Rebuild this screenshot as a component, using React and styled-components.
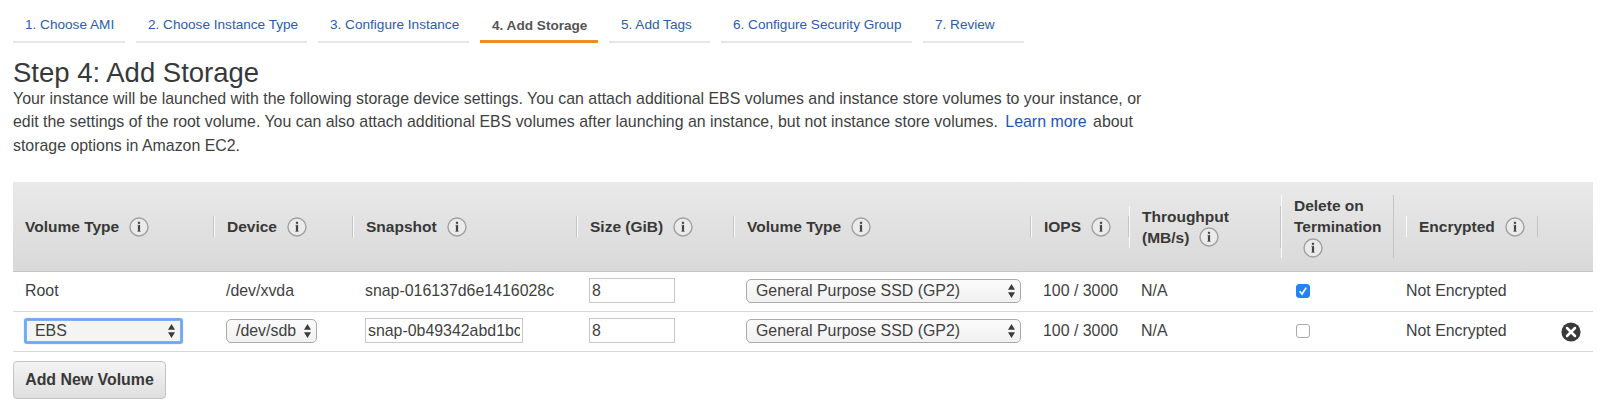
import React from "react";
import styled, { createGlobalStyle, css } from "styled-components";

const GlobalStyle = createGlobalStyle`
  * { box-sizing: border-box; }
  body {
    margin: 0;
    background: #fff;
    color: #3f3f3f;
    font-family: "Liberation Sans", Arial, Helvetica, sans-serif;
    font-size: 15.9px;
  }
`;

const Page = styled.main`
  width: 1600px;
  height: 414px;
  padding: 12px 7px 0 13px;
  overflow: hidden;
`;

const Steps = styled.nav`
  display: flex;
  gap: 11px;
  height: 31px;
`;

const Step = styled.a`
  width: ${(p) => p.$width}px;
  height: 31px;
  padding: ${(p) => (p.$active ? 5 : 4)}px 0 0 12px;
  border-bottom: ${(p) => (p.$active ? "3px solid #f28c1c" : "2px solid #e6e6e6")};
  color: ${(p) => (p.$active ? "#555" : "#2a5db0")};
  font-size: 13.6px;
  font-weight: ${(p) => (p.$active ? 700 : 400)};
  line-height: 17px;
  white-space: nowrap;
`;

const Title = styled.h1`
  margin: 13px 0 0;
  color: #383838;
  font-size: 27.5px;
  font-weight: 400;
  line-height: 34px;
`;

const Intro = styled.p`
  margin: -3px 0 0;
  height: 95px;
  line-height: 23.4px;
  white-space: nowrap;
`;

const Line = styled.span`
  display: block;
`;

const Link = styled.a`
  margin: 0 2px 0 3px;
  color: #1a56b8;
`;

const columns = css`
  display: grid;
  grid-template-columns: 201px 139px 224px 157px 297px 98px 152px 125px 132px 55px;
`;

const HeadRow = styled.div`
  ${columns}
  height: 90px;
  align-items: center;
  background: linear-gradient(#e9e9e9, #d9d9d9);
  border-bottom: 1px solid #c6c6c6;
  color: #383838;
  font-size: 15.5px;
  font-weight: 700;
  line-height: 21px;
`;

const HeadCell = styled.div`
  margin-right: ${(p) => p.$inset || 0}px;
  padding-left: 12px;
  border-left: ${(p) => (p.$first ? "0" : "1px solid #fafafa")};
  border-right: 1px solid #c4c4c4;
  white-space: nowrap;
`;

const HeadLine = styled.div`
  display: flex;
  align-items: center;
  gap: 10px;
  height: 21px;
  padding-left: ${(p) => p.$indent || 0}px;
`;

const BodyRow = styled.div`
  ${columns}
  height: 40px;
  padding-bottom: 2px;
  align-items: center;
  border-bottom: 1px solid #d8d8d8;
`;

const Cell = styled.div`
  display: flex;
  align-items: center;
  height: 25px;
  padding-left: ${(p) => p.$left ?? 12}px;
  padding-top: ${(p) => p.$top || 0}px;
  white-space: nowrap;
`;

const Select = styled.div`
  display: flex;
  align-items: center;
  justify-content: space-between;
  width: ${(p) => p.$width}px;
  height: 24px;
  padding: 0 4px 0 9px;
  border: 1px solid #a9a9a9;
  border-radius: 5px;
  background: linear-gradient(#fbfbfb, #f1f1f1);
  ${(p) =>
    p.$focused &&
    css`
      height: 22px;
      margin-left: 1px;
      padding-left: 8px;
      border-color: #7fb0f0;
      border-radius: 1px;
      background: #f4f4f4;
      box-shadow: 0 0 1px 2px #6ba6f5;
    `}
`;

const Field = styled.input`
  width: ${(p) => p.$width}px;
  height: 25px;
  padding: 0 2px;
  border: 1px solid #c8c8c8;
  background: #fff;
  color: inherit;
  font: inherit;
`;

const Check = styled.span`
  display: flex;
  align-items: center;
  justify-content: center;
  width: 14px;
  height: 14px;
  border: 1px solid ${(p) => (p.$checked ? "#2383f6" : "#a8a8a8")};
  border-radius: 3px;
  background: ${(p) => (p.$checked ? "#2383f6" : "#fff")};
`;

const AddButton = styled.button`
  display: block;
  width: 153px;
  height: 38px;
  margin-top: 9px;
  padding: 0;
  border: 1px solid #c3c3c3;
  border-radius: 4px;
  background: linear-gradient(#f3f3f3, #dfdfdf);
  color: #383838;
  font: 700 15.9px "Liberation Sans", Arial, sans-serif;
`;

const InfoIcon = () => (
  <svg width="20" height="20" viewBox="0 0 20 20">
    <circle cx="10" cy="10" r="9" fill="#ebebeb" stroke="#a0a0a0" strokeWidth="1.4" />
    <path d="M10 7.9v6.9" fill="none" stroke="#444" strokeWidth="2.2" />
    <path d="M8.2 8.4H10M8.2 14.4h3.6" fill="none" stroke="#888" strokeWidth="0.8" />
    <rect x="8.9" y="4.8" width="2.2" height="2" fill="#444" />
  </svg>
);

const Arrows = () => (
  <svg width="9" height="16" viewBox="0 0 9 16">
    <path d="M4.5 1 8 6.7H1zM4.5 15 8 9.3H1z" fill="#3c3c3c" />
  </svg>
);

const Tick = () => (
  <svg width="10" height="10" viewBox="0 0 10 10">
    <path d="M1.6 5.2 4 8 8.2 1.6" fill="none" stroke="#fff" strokeWidth="1.7" />
  </svg>
);

const RemoveIcon = () => (
  <svg width="20" height="20" viewBox="0 0 20 20">
    <circle cx="10" cy="10" r="9.6" fill="#3a3a3a" />
    <path d="m6 6 8 8M14 6l-8 8" stroke="#fff" strokeWidth="2.5" strokeLinecap="round" />
  </svg>
);

const steps = [
  { label: "1. Choose AMI", width: 112 },
  { label: "2. Choose Instance Type", width: 171 },
  { label: "3. Configure Instance", width: 151 },
  { label: "4. Add Storage", width: 118, active: true },
  { label: "5. Add Tags", width: 101 },
  { label: "6. Configure Security Group", width: 191 },
  { label: "7. Review", width: 101 },
];

const headings = [
  { lines: ["Volume Type"] },
  { lines: ["Device"] },
  { lines: ["Snapshot"] },
  { lines: ["Size (GiB)"] },
  { lines: ["Volume Type"] },
  { lines: ["IOPS"] },
  { lines: ["Throughput", "(MB/s)"] },
  { lines: ["Delete on", "Termination", ""], inset: 12 },
  { lines: ["Encrypted"] },
];

const Heading = ({ lines, inset, first }) => (
  <HeadCell $inset={inset} $first={first}>
    {lines.map((line, i) => (
      <HeadLine key={i} $indent={line ? 0 : 9}>
        {line && <span>{line}</span>}
        {i === lines.length - 1 && <InfoIcon />}
      </HeadLine>
    ))}
  </HeadCell>
);

const VolumeRow = ({ type, device, snapshot, checked, removable }) => (
  <BodyRow>
    <Cell>{type}</Cell>
    <Cell>{device}</Cell>
    <Cell>{snapshot}</Cell>
    <Cell>
      <Field $width={86} defaultValue="8" />
    </Cell>
    <Cell>
      <Select $width={275}>
        General Purpose SSD (GP2)
        <Arrows />
      </Select>
    </Cell>
    <Cell>100 / 3000</Cell>
    <Cell>N/A</Cell>
    <Cell $left={15}>
      <Check $checked={checked}>{checked && <Tick />}</Check>
    </Cell>
    <Cell $left={0}>Not Encrypted</Cell>
    <Cell $left={23} $top={3}>
      {removable && <RemoveIcon />}
    </Cell>
  </BodyRow>
);

export default function App() {
  return (
    <Page>
      <GlobalStyle />
      <Steps>
        {steps.map((s) => (
          <Step key={s.label} $width={s.width} $active={s.active}>
            {s.label}
          </Step>
        ))}
      </Steps>
      <Title>Step 4: Add Storage</Title>
      <Intro>
        <Line>
          Your instance will be launched with the following storage device settings. You can attach
          additional EBS volumes and instance store volumes to your instance, or
        </Line>
        <Line>
          edit the settings of the root volume. You can also attach additional EBS volumes after
          launching an instance, but not instance store volumes. <Link>Learn more</Link> about
        </Line>
        <Line>storage options in Amazon EC2.</Line>
      </Intro>
      <HeadRow>
        {headings.map((h, i) => (
          <Heading key={i} {...h} first={i === 0} />
        ))}
      </HeadRow>
      <VolumeRow type="Root" device="/dev/xvda" snapshot="snap-016137d6e1416028c" checked />
      <VolumeRow
        type={
          <Select $width={155} $focused>
            EBS
            <Arrows />
          </Select>
        }
        device={
          <Select $width={91}>
            /dev/sdb
            <Arrows />
          </Select>
        }
        snapshot={<Field $width={158} defaultValue="snap-0b49342abd1bc" />}
        removable
      />
      <AddButton>Add New Volume</AddButton>
    </Page>
  );
}
